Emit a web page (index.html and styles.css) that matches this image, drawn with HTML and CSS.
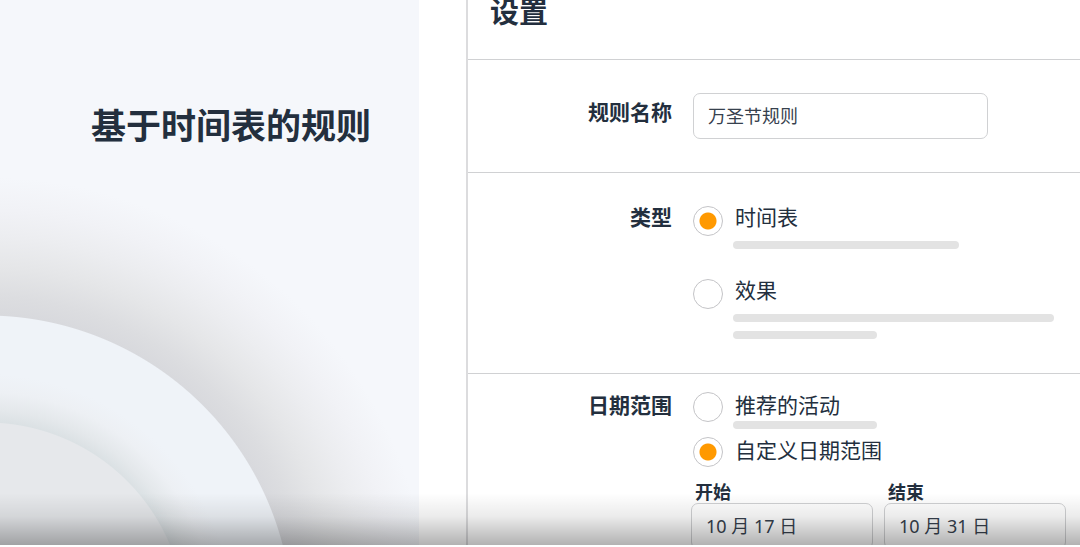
FILE: index.html
```html
<!DOCTYPE html>
<html lang="zh-CN">
<head>
    <meta charset="UTF-8">
    <meta name="viewport" content="width=device-width, initial-scale=1.0">
    <title>基于时间表的规则</title>
    <link rel="stylesheet" href="styles.css">
</head>
<body>
    <div class="page">
        <aside class="intro">
            <h1>基于时间表的规则</h1>
        </aside>

        <form class="settings">
            <header class="settings-header">
                <h2>设置</h2>
            </header>

            <div class="row row-name">
                <label class="row-label" for="ruleName">规则名称</label>
                <input class="text-input name-input" type="text" id="ruleName" value="万圣节规则">
            </div>

            <div class="row row-type" role="radiogroup" aria-labelledby="typeLabel">
                <span class="row-label" id="typeLabel">类型</span>
                <div class="options">
                    <div class="option">
                        <input type="radio" name="type" id="typeSchedule" checked>
                        <div class="option-body">
                            <label for="typeSchedule">时间表</label>
                            <div class="bar bar-medium"></div>
                        </div>
                    </div>
                    <div class="option">
                        <input type="radio" name="type" id="typePerformance">
                        <div class="option-body">
                            <label for="typePerformance">效果</label>
                            <div class="bar bar-long"></div>
                            <div class="bar bar-short"></div>
                        </div>
                    </div>
                </div>
            </div>

            <div class="row row-range" role="radiogroup" aria-labelledby="rangeLabel">
                <span class="row-label" id="rangeLabel">日期范围</span>
                <div class="options">
                    <div class="option">
                        <input type="radio" name="range" id="rangeEvents">
                        <div class="option-body">
                            <label for="rangeEvents">推荐的活动</label>
                            <div class="bar bar-short"></div>
                        </div>
                    </div>
                    <div class="option">
                        <input type="radio" name="range" id="rangeCustom" checked>
                        <div class="option-body">
                            <label for="rangeCustom">自定义日期范围</label>
                        </div>
                    </div>
                    <div class="dates">
                        <div class="date">
                            <label for="startDate">开始</label>
                            <input class="text-input" type="text" id="startDate" value="10 月 17 日">
                        </div>
                        <div class="date">
                            <label for="endDate">结束</label>
                            <input class="text-input" type="text" id="endDate" value="10 月 31 日">
                        </div>
                    </div>
                </div>
            </div>
        </form>

        <div class="fade"></div>
    </div>
</body>
</html>
```
FILE: styles.css
```css
* {
    box-sizing: border-box;
}
body {
    margin: 0;
    background-color: #fff;
    color: #232f3e;
    font-family: "Noto Sans CJK SC", "Noto Sans", sans-serif;
}
.page {
    position: relative;
    display: flex;
    gap: 47px;
    height: calc(100vh - 2px);
    overflow: hidden;
}
h1, h2 {
    margin: 0;
    font-weight: 700;
}

/* Left panel with the two discs rising from the corner */
.intro {
    flex: none;
    width: 38.8%;
    padding: 99px 48px 0 0;
    text-align: right;
    background: radial-gradient(circle at -14px calc(100% + 77px),
        #e6e8eb 199px,
        #dbe1e4 200px,
        #e4e8eb 212px,
        #edf0f4 230px,
        #eff3f8 248px,
        #eff3f8 306px,
        #d8d9dd 307px,
        #dcdde0 325px,
        #e5e6e8 355px,
        #ecedf0 385px,
        #f1f2f6 412px,
        #f5f7fb 445px);
}
.intro h1 {
    font-size: 35px;
    line-height: 50px;
    white-space: nowrap;
}

/* Settings form */
.settings {
    flex: 1;
    min-width: 0;
    border-left: 2px solid #dcdcde;
}
.settings-header {
    padding: 0 22px 39px;
    border-bottom: 1px solid #d0d1d3;
}
.settings-header h2 {
    font-size: 29px;
    line-height: 20px;
}
.row {
    display: grid;
    grid-template-columns: 204px 1fr;
    column-gap: 21px;
    border-bottom: 1px solid #d0d1d3;
}
.row-name {
    padding: 33px 0;
}
.row-type {
    padding: 31px 0 34px;
}
.row-range {
    padding: 18px 0 24px;
    border-bottom: none;
}
.row-label {
    font-size: 21px;
    font-weight: 700;
    line-height: 24px;
    text-align: right;
}
.row-name .row-label {
    padding-top: 6px;
}
.text-input {
    width: 100%;
    height: 46px;
    padding: 0 14px 3px;
    border: 1px solid #d0d1d3;
    border-radius: 7px;
    background-color: #fff;
    color: #37414e;
    font-family: "Noto Sans", "Noto Sans CJK SC", sans-serif;
    font-size: 18px;
}
.name-input {
    max-width: 295px;
}

.option {
    display: flex;
    gap: 12px;
}
.option-body {
    flex: 1;
}
.option label {
    display: block;
    font-size: 21px;
    line-height: 24px;
}
.row-type .option + .option {
    margin-top: 28px;
}
.row-range .option + .option {
    margin-top: 8px;
}
input[type="radio"] {
    appearance: none;
    flex: none;
    width: 30px;
    height: 30px;
    margin: 0;
    border: 1px solid #c4c4c7;
    border-radius: 50%;
    background-color: #fff;
}
input[type="radio"]:checked {
    background-image: radial-gradient(circle, #f90 8px, #fff 9px);
}
.row-type input[type="radio"] {
    margin-top: 2px;
}

/* Grey lines standing in for description text */
.bar {
    height: 8px;
    margin: 5px 0 0 -2px;
    border-radius: 4px;
    background-color: #e3e3e3;
}
.row-type .bar {
    margin-top: 13px;
}
.row-type .bar + .bar {
    margin-top: 9px;
}
.bar-short {
    width: 144px;
}
.bar-medium {
    width: 226px;
}
.bar-long {
    width: 321px;
}

.dates {
    display: flex;
    gap: 11px;
    margin: 12px 14px 0 -2px;
}
.date {
    flex: 1;
}
.date label {
    display: block;
    padding-left: 4px;
    font-size: 18px;
    font-weight: 700;
    line-height: 24px;
}

/* Shade over the bottom edge */
.fade {
    position: absolute;
    left: 0;
    right: 0;
    bottom: 0;
    height: 52px;
    background: linear-gradient(rgba(0, 0, 0, 0), rgba(0, 0, 0, 0.08) 45%, rgba(0, 0, 0, 0.3));
    pointer-events: none;
}
```
